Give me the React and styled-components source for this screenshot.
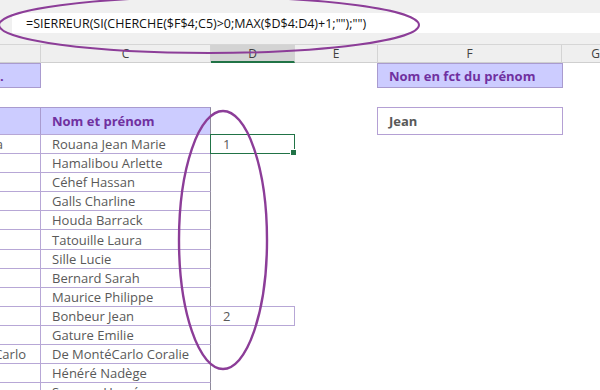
import React from 'react';
import styled, { createGlobalStyle } from 'styled-components';

const Global = createGlobalStyle`
  html, body { margin: 0; padding: 0; background: #fff; }
  body { font-family: "Open Sans", "Noto Sans", sans-serif; }
`;

const COLS = '41px 170px 84px 83px 184px 1fr';
const LINE = '#b7a7d6';

const Screen = styled.div`
  position: relative;
  width: 600px;
  height: 390px;
  overflow: hidden;
  background: #fff;
`;

const Top = styled.div`
  background: #f0f0f0;
  padding: 13px 0 11px 12px;
  border-bottom: 1px solid #d6d6d6;
`;

const FormulaBar = styled.div`
  height: 20px;
  background: #fff;
  display: flex;
  align-items: center;
  padding-left: 14px;
  font-size: 12.5px;
  color: #111;
  white-space: nowrap;
`;

const Row = styled.div`
  display: grid;
  grid-template-columns: ${COLS};
  height: ${p => p.h}px;
`;

const ColHead = styled.div`
  background: ${p => (p.active ? '#d3d3d3' : '#efefef')};
  border-right: 1px solid #d4d4d4;
  border-bottom: ${p => (p.active ? '2px solid #217346' : '1px solid #cfcfcf')};
  color: #404040;
  font-size: 12px;
  display: flex;
  align-items: center;
  justify-content: center;
  box-sizing: border-box;
  overflow: hidden;
  &:last-child { justify-content: flex-end; border-right: none; }
`;

const Blank = styled.div`
  box-sizing: border-box;
`;

const LavBox = styled.div`
  background: #ccccff;
  box-sizing: border-box;
  border: 1px solid #a99bcf;
  border-left: ${p => (p.cut ? 'none' : '1px solid #a99bcf')};
  color: #7030a0;
  font-weight: 700;
  font-size: 13px;
  display: flex;
  align-items: center;
  padding-left: ${p => (p.cut ? 0 : 11)}px;
  margin: ${p => (p.cut ? '0' : '0 -1px 0 -1px')};
  white-space: nowrap;
  overflow: hidden;
`;

const InputBox = styled.div`
  box-sizing: border-box;
  border: 1px solid #b4a0d4;
  color: #595959;
  font-weight: 700;
  font-size: 13px;
  display: flex;
  align-items: center;
  padding-left: 11px;
  margin: 0 -1px;
`;

const TableHead = styled.div`
  background: #ccccff;
  box-sizing: border-box;
  border-top: 1px solid #a99bcf;
  border-bottom: 1px solid ${LINE};
  border-right: 1px solid ${p => (p.last ? '#8f8a9c' : '#a99bcf')};
  color: #7030a0;
  font-weight: 700;
  font-size: 13px;
  display: flex;
  align-items: center;
  padding-left: 11px;
`;

const Cell = styled.div`
  box-sizing: border-box;
  border-bottom: 1px solid ${LINE};
  border-right: 1px solid ${p => (p.last ? '#8f8a9c' : LINE)};
  color: #595959;
  font-size: 13px;
  display: flex;
  align-items: center;
  justify-content: ${p => (p.right ? 'flex-end' : 'flex-start')};
  padding: 0 ${p => p.pr || 0}px 0 ${p => (p.right ? 0 : 11)}px;
  white-space: nowrap;
  overflow: hidden;
`;

const NumCell = styled.div`
  position: relative;
  box-sizing: border-box;
  margin: -1px 0 0 -1px;
  border: 1px solid ${p => (p.selected ? '#217346' : LINE)};
  color: #595959;
  font-size: 13px;
  display: flex;
  align-items: center;
  padding-left: 12px;
`;

const Handle = styled.span`
  position: absolute;
  right: -3px;
  bottom: -3px;
  width: 5px;
  height: 5px;
  background: #217346;
  border: 1px solid #fff;
`;

const Overlay = styled.svg`
  position: absolute;
  inset: 0;
  pointer-events: none;
`;

const names = [
  ['a', 'Rouana Jean Marie', 1],
  ['', 'Hamalibou Arlette'],
  ['', 'Céhef Hassan'],
  ['', 'Galls Charline'],
  ['', 'Houda Barrack'],
  ['', 'Tatouille Laura'],
  ['', 'Sille Lucie'],
  ['', 'Bernard Sarah'],
  ['', 'Maurice Philippe'],
  ['', 'Bonbeur Jean', 2],
  ['', 'Gature Emilie'],
  ['Carlo', 'De MontéCarlo Coralie'],
  ['', 'Hénéré Nadège'],
  ['', 'Sorgeur Hervé'],
];

export default function App() {
  return (
    <Screen>
      <Global />
      <Top>
        <FormulaBar>=SIERREUR(SI(CHERCHE($F$4;C5)&gt;0;MAX($D$4:D4)+1;"");"")</FormulaBar>
      </Top>
      <Row h={18}>
        <ColHead />
        <ColHead>C</ColHead>
        <ColHead active>D</ColHead>
        <ColHead>E</ColHead>
        <ColHead>F</ColHead>
        <ColHead>G</ColHead>
      </Row>
      <Row h={25}>
        <LavBox cut>.</LavBox>
        <Blank />
        <Blank />
        <Blank />
        <LavBox>Nom en fct du prénom</LavBox>
        <Blank />
      </Row>
      <Row h={19} />
      <Row h={28}>
        <TableHead />
        <TableHead last>Nom et prénom</TableHead>
        <Blank />
        <Blank />
        <InputBox>Jean</InputBox>
        <Blank />
      </Row>
      {names.map(([b, c, n], i) => (
        <Row h={i === 5 ? 20 : 19} key={c}>
          <Cell right pr={i === 0 ? 37 : 14}>{b}</Cell>
          <Cell last>{c}</Cell>
          {n ? (
            <NumCell selected={n === 1}>
              {n}
              {n === 1 && <Handle />}
            </NumCell>
          ) : (
            <Blank />
          )}
          <Blank />
          <Blank />
          <Blank />
        </Row>
      ))}
      <Overlay width="600" height="390" viewBox="0 0 600 390">
        <ellipse cx="209" cy="25" rx="210" ry="28" fill="none" stroke="#8c3d98" strokeWidth="2" />
        <ellipse cx="223" cy="240" rx="44" ry="129" fill="none" stroke="#8c3d98" strokeWidth="2.4" />
      </Overlay>
    </Screen>
  );
}
